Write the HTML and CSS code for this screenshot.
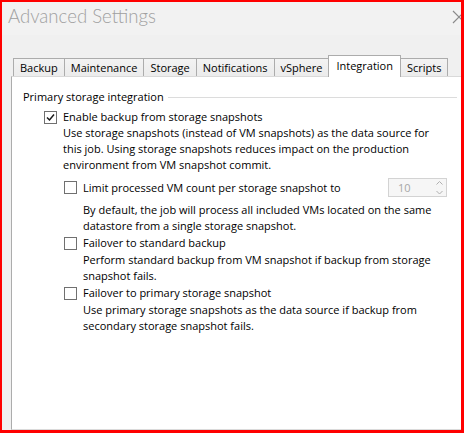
FILE: index.html
```html
<!DOCTYPE html>
<html>
<head>
<meta charset="utf-8">
<link rel="stylesheet" href="styles.css">
</head>
<body>
<div class="window">
  <div class="titlebar">
    <span class="title">Advanced Settings</span>
    <svg class="close" width="14" height="14" viewBox="0 0 14 14"><path d="M1 1 L13 13 M13 1 L1 13" stroke="#8a8a8a" stroke-width="1.2" fill="none"/></svg>
  </div>
  <div class="content">
    <div class="tabs">
      <div class="tab">Backup</div>
      <div class="tab">Maintenance</div>
      <div class="tab">Storage</div>
      <div class="tab">Notifications</div>
      <div class="tab">vSphere</div>
      <div class="tab active">Integration</div>
      <div class="tab">Scripts</div>
    </div>
    <div class="panel">
      <div class="group-header"><span>Primary storage integration</span><span class="rule"></span></div>
      <div class="level1">
        <div class="check-row">
          <span class="cb"><svg width="11" height="11" viewBox="0 0 11 11"><polyline points="2,5.5 4.5,8 9,2.5" stroke="#1a1a1a" stroke-width="1.5" fill="none"/></svg></span>
          <span>Enable backup from storage snapshots</span>
        </div>
        <div class="desc">Use storage snapshots (instead of VM snapshots) as the data source for<br>this job. Using storage snapshots reduces impact on the production<br>environment from VM snapshot commit.</div>
        <div class="sub">
          <div class="check-row spin-row">
            <div class="check-label"><span class="cb"></span><span>Limit processed VM count per storage snapshot to</span></div>
            <div class="spin"><span>10</span><svg width="9" height="17" viewBox="0 0 9 17"><polyline points="1.5,5.5 4.5,2.5 7.5,5.5" stroke="#b0b0b0" stroke-width="1" fill="none"/><polyline points="1.5,12 4.5,15 7.5,12" stroke="#b0b0b0" stroke-width="1" fill="none"/></svg></div>
          </div>
          <div class="desc after-spin">By default, the job will process all included VMs located on the same<br>datastore from a single storage snapshot.</div>
          <div class="check-row item">
            <span class="cb"></span><span>Failover to standard backup</span>
          </div>
          <div class="desc item">Perform standard backup from VM snapshot if backup from storage<br>snapshot fails.</div>
          <div class="check-row item">
            <span class="cb"></span><span>Failover to primary storage snapshot</span>
          </div>
          <div class="desc item">Use primary storage snapshots as the data source if backup from<br>secondary storage snapshot fails.</div>
        </div>
      </div>
    </div>
  </div>
</div>
</body>
</html>
```
FILE: styles.css
```css
html, body {
  margin: 0;
  padding: 0;
}
body {
  width: 464px;
  height: 433px;
  box-sizing: border-box;
  border-style: solid;
  border-color: #ff0000;
  border-width: 2px 3px 3px 2px;
  overflow: hidden;
  font-family: "Open Sans", "Noto Sans", sans-serif;
  font-size: 11px;
  color: #000;
}
.window {
  height: 100%;
  display: flex;
  flex-direction: column;
  background: #f0f0f0;
  overflow: hidden;
}
.titlebar {
  height: 33px;
  flex: none;
  background: #f2f2f2;
  display: flex;
  justify-content: space-between;
  align-items: flex-start;
}
.title {
  font-family: Lato, "Open Sans", sans-serif;
  font-weight: 300;
  font-size: 18.6px;
  line-height: 24px;
  padding: 2px 0 0 6px;
  color: #a0a0a0;
}
.close {
  flex: none;
  margin: 8px -5px 0 0;
}
.content {
  flex: 1;
  display: flex;
  flex-direction: column;
  padding: 20px 0 0 9px;
  min-height: 0;
}
.tabs {
  display: flex;
  align-items: flex-end;
  padding-left: 2px;
  height: 22px;
  flex: none;
  margin-bottom: -1px;
}
.tab {
  height: 19px;
  box-sizing: border-box;
  border: 1px solid #acacac;
  border-bottom: none;
  padding: 0 6px;
  line-height: 18px;
  margin-right: -1px;
  background: linear-gradient(#f3f3f3, #ebebeb);
  white-space: nowrap;
}
.tab.active {
  height: 22px;
  line-height: 19px;
  padding: 0 7px;
  background: #fff;
  position: relative;
  z-index: 1;
}
.panel {
  flex: 1;
  background: #fff;
  border-top: 1px solid #d9d9d9;
  border-left: 1px solid #acacac;
  border-bottom: 1px solid #dadada;
  padding: 12px 4px 0 11px;
}
.group-header {
  display: flex;
  align-items: center;
  gap: 4px;
  line-height: 16px;
}
.rule {
  flex: 1;
  height: 1px;
  background: #dcdcdc;
}
.level1 {
  margin-top: 4px;
  padding-left: 21px;
}
.check-row {
  display: flex;
  align-items: center;
  gap: 6px;
  height: 16px;
  line-height: 16px;
  white-space: nowrap;
}
.check-label {
  display: flex;
  align-items: center;
  gap: 6px;
}
.cb {
  flex: none;
  width: 13px;
  height: 13px;
  box-sizing: border-box;
  border: 1px solid #707070;
  background: #fff;
  display: flex;
  align-items: center;
  justify-content: center;
}
.desc {
  padding-left: 19px;
  line-height: 16px;
  white-space: nowrap;
}
.sub {
  padding-left: 20px;
}
.spin-row {
  height: 19px;
  margin-top: 5px;
  justify-content: space-between;
}
.spin {
  width: 59px;
  height: 19px;
  box-sizing: border-box;
  border: 1px solid #d3d3d3;
  background: #f6f6f6;
  color: #a6a6a6;
  display: flex;
  align-items: center;
  justify-content: space-between;
  padding: 0 2px 0 9px;
  margin-right: 10px;
}
.after-spin {
  margin-top: 5px;
}
.item {
  margin-top: 1px;
}
```
